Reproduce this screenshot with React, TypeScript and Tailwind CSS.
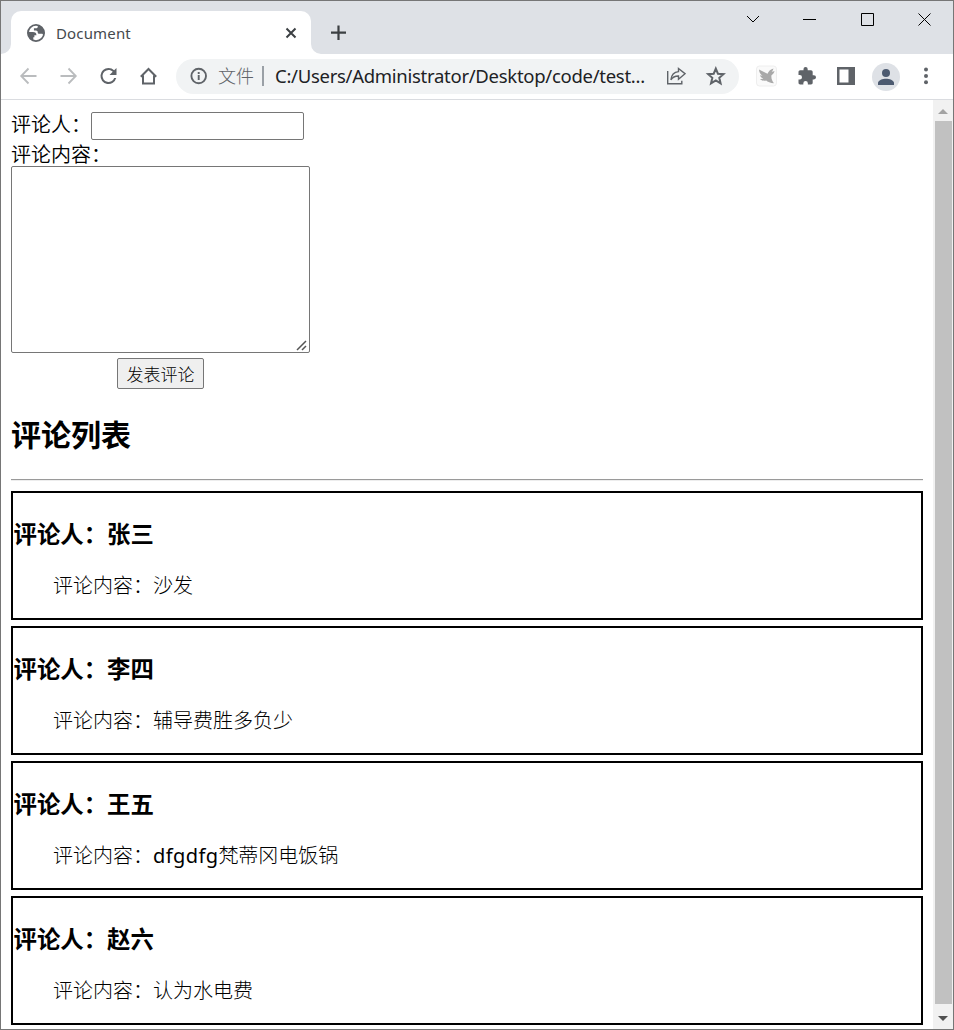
import type { ReactNode } from "react";

const comments = [
  { author: "张三", body: "沙发" },
  { author: "李四", body: "辅导费胜多负少" },
  { author: "王五", body: "dfgdfg梵蒂冈电饭锅", latin: "dfgdfg" },
  { author: "赵六", body: "认为水电费" },
];

function Slot({ children }: { children: ReactNode }) {
  return <div className="flex h-10 w-10 shrink-0 items-center justify-center">{children}</div>;
}

function TabStrip() {
  return (
    <div className="flex h-[53px] shrink-0 items-start bg-[#dee1e6]">
      <div className="flex h-[53px] w-2.5 items-end">
        <svg width="10" height="10" viewBox="0 0 10 10"><path d="M10 0v10H0A10 10 0 0 0 10 0z" fill="#fff" /></svg>
      </div>
      <div className="mt-[10px] flex h-[43px] w-[300px] items-center rounded-t-[10px] bg-white pl-4">
        <svg width="18" height="18" viewBox="2 2 20 20" fill="#5f6368">
          <circle cx="12" cy="12" r="9" fill="#fff" stroke="#5f6368" strokeWidth="2" />
          <path d="M3 11h5.500c2.800 0 4 1.300 4 3.500h-2.300v2.300H9V21C5 19.500 3 16 3 11zM14 3.200v1.500c0 1.300-.9 2.100-2.200 2.100H9.700v2.300H12c1.200 0 1.900.8 1.900 2s.7 1.700 1.900 1.700h2.300c1 0 1.700.6 2 1.500l1.200-2.300C21 8 18.500 4.500 14 3.200z" />
        </svg>
        <span className="ml-[11px] w-[228px] text-[15px] leading-5 tracking-[0.15px] text-[#45494d]">Document</span>
        <svg className="ml-[1px]" width="12" height="12" viewBox="0 0 12 12" stroke="#3c4043" strokeWidth="2"><path d="M1.500 1.500l9 9M10.500 1.500l-9 9" /></svg>
      </div>
      <div className="flex h-[53px] w-2.5 items-end">
        <svg width="10" height="10" viewBox="0 0 10 10"><path d="M0 0v10h10A10 10 0 0 1 0 0z" fill="#fff" /></svg>
      </div>
      <svg className="ml-[9px] mt-[23px]" width="17" height="17" viewBox="0 0 17 17" stroke="#3c4043" strokeWidth="2.200"><path d="M8.500 1.500v14.500M1 8.700h15" /></svg>
      <div className="ml-auto mr-[21px] mt-[10px] flex h-4 items-center text-black">
        <svg width="16" height="16" viewBox="0 0 16 16" fill="none" stroke="currentColor"><path d="M2 5l6 6 6-6" /></svg>
        <svg className="ml-10" width="16" height="16" viewBox="0 0 16 16" stroke="currentColor"><path d="M2 8.500h13" /></svg>
        <svg className="ml-[42px]" width="16" height="16" viewBox="0 0 16 16" fill="none" stroke="currentColor"><path d="M2.500 2.500h12v12h-12z" /></svg>
        <svg className="ml-[41px]" width="16" height="16" viewBox="0 0 16 16" stroke="currentColor"><path d="M2.500 2.500l12 12M14.500 2.500l-12 12" /></svg>
      </div>
    </div>
  );
}

function Toolbar() {
  return (
    <div className="flex h-[46px] shrink-0 items-center border-b border-[#dadce0] bg-white pb-px pl-2">
      <Slot>
        <svg width="24" height="24" viewBox="0 0 24 24" fill="none" stroke="#babcbe" strokeWidth="1.800"><path d="M19.500 12h-15M11.500 4.500L4.200 12l7.300 7.500" /></svg>
      </Slot>
      <Slot>
        <svg width="24" height="24" viewBox="0 0 24 24" fill="none" stroke="#babcbe" strokeWidth="1.800"><path d="M3.500 12h15M11.500 4.500l7.300 7.500-7.300 7.500" /></svg>
      </Slot>
      <Slot>
        <svg width="24" height="24" viewBox="0.500 0 24 24" fill="#5f6368"><path d="M17.650 6.350A7.960 7.960 0 0 0 12 4a8 8 0 1 0 7.730 10h-2.080A6 6 0 1 1 12 6c1.660 0 3.140.69 4.220 1.780L13 11h7V4l-2.350 2.350z" /></svg>
      </Slot>
      <Slot>
        <svg width="24" height="24" viewBox="0.500 0 24 24" fill="none" stroke="#5f6368" strokeWidth="2"><path d="M4.300 12.700L12 5l7.700 7.700M6.500 11.500v8h11v-8" /></svg>
      </Slot>
      <div className="ml-[7px] flex h-[35px] w-[563px] items-center rounded-full bg-[#f1f3f4] pl-[13px]">
        <svg width="20" height="20" viewBox="0 0 20 20" fill="none" stroke="#5f6368" strokeWidth="1.900"><circle cx="9.700" cy="10" r="7.300" /><path d="M9.700 9v5M9.700 6v2" /></svg>
        <span className="ml-[9px] w-9 text-[18px] font-light leading-6 text-[#5f6368]">文件</span>
        <div className="ml-2 h-5 w-0.5 bg-[#9aa0a6]" />
        <span className="ml-[11px] w-[386px] whitespace-nowrap text-[18.500px] leading-6 tracking-[-0.280px] text-[#202124]">C:/Users/Administrator/Desktop/code/test...</span>
        <svg className="ml-[5px]" width="20" height="20" viewBox="0 0 20 20" fill="none" stroke="#5f6368" strokeWidth="1.400">
          <path d="M1.700 5v12.800h14.100v-3M12.500 2.500l6.500 5.200-6.500 5.500V10c-3.700-.1-5.900 1.100-7.600 3.900.5-5.200 3.200-7.900 7.600-8.300z" />
        </svg>
        <svg className="ml-[19px]" width="22" height="22" viewBox="0.700 0 24 24" fill="none" stroke="#5f6368" strokeWidth="2.200"><path d="M12.500 4l2.300 5.500 6.100.5-4.600 4 1.400 6-5.200-3.100-5.200 3.100 1.400-6-4.600-4 6.100-.5z" /></svg>
      </div>
      <div className="ml-[7px] flex">
        <Slot>
          <svg width="22" height="22" viewBox="0 0 22 22">
            <rect x="1.500" y="1" width="20" height="20" rx="3" fill="#fafafa" stroke="#eee" />
            <path d="M4 4.500l8.500 4.300c1-2.700 3.500-4.800 6-5.300-.4 1.200-.8 2.200-1.800 3.200 1 0 2-.2 2.800-.7-.2 1.500-1.200 2.800-3 4.200-.5 2.800.5 5.500 2.500 8-3.500 0-6.500-1.300-7.800-2.700-2 .6-4.700.2-6.200-1.600l3.500-.1c-2-.8-3.200-2-3.500-3.500l2.500.5C5.300 9.200 4 7 4 4.500z" fill="#a9a9a9" />
          </svg>
        </Slot>
        <Slot>
          <svg width="22" height="22" viewBox="0 0 24 24" fill="#5f6368"><path d="M20.500 11H19V7c0-1.100-.9-2-2-2h-4V3.500a2.500 2.500 0 0 0-5 0V5H4c-1.100 0-2 .9-2 2v3.800h1.500a2.700 2.700 0 0 1 0 5.400H2V20c0 1.100.9 2 2 2h3.800v-1.500a2.700 2.700 0 0 1 5.400 0V22H17c1.100 0 2-.9 2-2v-4h1.500a2.500 2.500 0 0 0 0-5z" transform="translate(2 1.200) scale(.91)" /></svg>
        </Slot>
        <Slot>
          <svg width="18" height="18" viewBox="0 0 18 18"><path d="M0 0h18v18H0z" fill="#5f6368" /><path d="M2.500 2.500h9v13h-9z" fill="#fff" /></svg>
        </Slot>
        <Slot>
          <svg className="mt-px" width="28" height="28" viewBox="0 0 28 28"><circle cx="14" cy="14" r="14" fill="#dee1e6" /><circle cx="14" cy="10" r="4" fill="#4c5a70" /><path d="M6 22v-2c0-2.900 4.800-4.300 8-4.300s8 1.400 8 4.300v2z" fill="#4c5a70" /></svg>
        </Slot>
        <Slot>
          <svg width="4" height="18" viewBox="0 0 4 18" fill="#5f6368"><circle cx="2" cy="2.500" r="2" /><circle cx="2" cy="8.900" r="2" /><circle cx="2" cy="15.300" r="2" /></svg>
        </Slot>
      </div>
    </div>
  );
}

function Scrollbar() {
  return (
    <div className="flex w-5 shrink-0 flex-col items-center bg-[#f1f1f1]">
      <svg className="mb-[6px] mt-[8px] h-[7px] w-[10px] shrink-0" viewBox="0 0 10 7"><path d="M0 6L5 1l5 5z" fill="#a3a3a3" /></svg>
      <div className="min-h-0 w-[17px] flex-1 bg-[#c1c1c1]" />
      <svg className="mb-[7px] mt-[12px] h-[6px] w-[10px] shrink-0" viewBox="0 0 10 6"><path d="M0 0h10L5 5z" fill="#505050" /></svg>
    </div>
  );
}

export default function App() {
  return (
    <div className="flex h-[1030px] w-[954px] flex-col overflow-hidden border border-[#767676] bg-white font-['Noto_Sans','Noto_Sans_CJK_SC',sans-serif]">
      <TabStrip />
      <Toolbar />
      <div className="flex min-h-0 flex-1">
        <main className="min-w-0 flex-1 pl-2.5 pr-[10px] pt-3 text-[20px] font-light text-black">
          <div className="flex h-7 items-start">
            <label htmlFor="author" className="w-20 font-[350] leading-[26px]">评论人：</label>
            <input id="author" className="h-7 w-[213px] rounded-[2px] border border-[#767676] bg-white px-1" />
          </div>
          <label htmlFor="content" className="block h-[26px] font-[350] leading-[30px]">评论内容：</label>
          <div className="relative h-[187px] w-[299px]">
            <textarea id="content" className="block h-full w-full resize-none rounded-[2px] border border-[#767676] bg-white p-1" />
            <svg className="absolute bottom-[2px] right-[3px]" width="11" height="11" viewBox="0 0 11 11" stroke="#555" strokeWidth="1.500"><path d="M1 10l9-9M6 10l4-4" /></svg>
          </div>
          <button className="ml-[106px] mt-[5px] block h-[31px] w-[87px] rounded-[2px] border border-[#767676] bg-[#efefef] pt-[2px] text-[17px] leading-[27px]">发表评论</button>
          <h2 className="mt-[26px] h-[41px] text-[30px] font-bold leading-[39px]">评论列表</h2>
          <hr className="mt-[23px] h-[2px] border-0 border-t border-[#9a9a9a] bg-[#ededed]" />
          <div className="mt-[10px] flex flex-col gap-[6px]">
            {comments.map(({ author, body, latin }) => (
              <section key={author} className="h-[129px] border-2 border-black">
                <h3 className="mt-[25px] h-8 pl-[0.5px] text-[23.400px] font-bold leading-8">评论人：{author}</h3>
                <p className="mt-[22px] pl-10 text-[20px] leading-7">
                  评论内容：{latin ? <><span className="font-normal tracking-[0.4px]">{latin}</span>{body.slice(latin.length)}</> : body}
                </p>
              </section>
            ))}
          </div>
        </main>
        <Scrollbar />
      </div>
    </div>
  );
}
